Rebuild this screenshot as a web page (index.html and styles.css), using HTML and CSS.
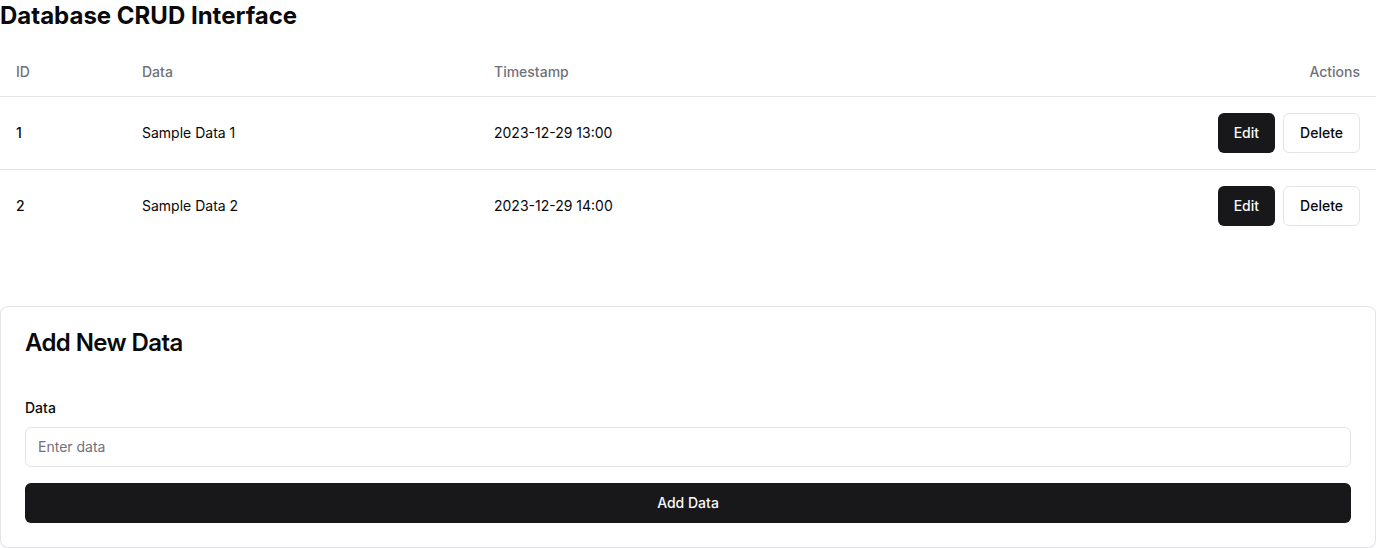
FILE: index.html
```html
<!DOCTYPE html>
<html>
<head>
<meta charset="utf-8">
<link rel="stylesheet" href="styles.css">
</head>
<body>
<div class="page">
  <h1 class="title">Database CRUD Interface</h1>
  <table class="table">
    <thead>
      <tr>
        <th class="col-id">ID</th>
        <th class="col-data">Data</th>
        <th>Timestamp</th>
        <th class="col-actions">Actions</th>
      </tr>
    </thead>
    <tbody>
      <tr>
        <td class="cell-id">1</td>
        <td>Sample Data 1</td>
        <td>2023-12-29 13:00</td>
        <td class="col-actions">
          <div class="actions">
            <button class="btn btn-dark">Edit</button>
            <button class="btn btn-outline">Delete</button>
          </div>
        </td>
      </tr>
      <tr>
        <td class="cell-id">2</td>
        <td>Sample Data 2</td>
        <td>2023-12-29 14:00</td>
        <td class="col-actions">
          <div class="actions">
            <button class="btn btn-dark">Edit</button>
            <button class="btn btn-outline">Delete</button>
          </div>
        </td>
      </tr>
    </tbody>
  </table>

  <div class="card">
    <div class="card-header">
      <h2 class="card-title">Add New Data</h2>
    </div>
    <div class="card-content">
      <label class="label" for="data">Data</label>
      <input id="data" class="input" type="text" placeholder="Enter data">
      <button class="btn btn-dark btn-full">Add Data</button>
    </div>
  </div>
</div>
</body>
</html>
```

FILE: styles.css
```css
* { box-sizing: border-box; }
html, body {
  margin: 0;
  padding: 0;
  background: #ffffff;
  color: #09090b;
  font-family: Inter, "Liberation Sans", sans-serif;
}
.page {
  width: 1376px;
}
.title {
  margin: 0 0 16px 0;
  font-size: 24px;
  line-height: 32px;
  font-weight: 700;
}
.table {
  width: 100%;
  border-collapse: collapse;
  font-size: 14px;
}
.table th {
  height: 48px;
  padding: 0 16px;
  text-align: left;
  vertical-align: middle;
  font-weight: 500;
  color: #71717a;
  border-bottom: 1px solid #e4e4e7;
}
.table td {
  padding: 16px;
  vertical-align: middle;
  line-height: 20px;
}
.table tbody tr {
  border-bottom: 1px solid #e4e4e7;
}
.table tbody tr:last-child {
  border-bottom: 0;
}
.col-id { width: 126px; }
.col-data { width: 352px; }
.table .col-actions {
  text-align: right;
  width: 1%;
  white-space: nowrap;
}
.cell-id { font-weight: 500; }
.actions {
  display: flex;
  justify-content: flex-end;
  gap: 8px;
}
.btn {
  height: 40px;
  padding: 0 16px;
  border-radius: 6px;
  font-family: inherit;
  font-size: 14px;
  font-weight: 500;
  cursor: pointer;
}
.btn-dark {
  background: #18181b;
  color: #fafafa;
  border: 0;
}
.btn-outline {
  background: #ffffff;
  color: #09090b;
  border: 1px solid #e4e4e7;
}
.card {
  margin-top: 64px;
  border: 1px solid #e4e4e7;
  border-radius: 8px;
  box-shadow: 0 1px 2px rgba(0,0,0,0.05);
  background: #fff;
}
.card-header {
  padding: 24px 24px 0 24px;
}
.card-title {
  margin: 0;
  font-size: 24px;
  line-height: 24px;
  font-weight: 600;
  letter-spacing: -0.6px;
}
.card-content {
  padding: 43px 24px 24px 24px;
  display: flex;
  flex-direction: column;
}
.label {
  font-size: 14px;
  line-height: 20px;
  font-weight: 500;
  margin-bottom: 9px;
}
.input {
  height: 40px;
  border: 1px solid #e4e4e7;
  border-radius: 6px;
  padding: 0 12px;
  font-family: inherit;
  font-size: 14px;
  color: #09090b;
  margin-bottom: 16px;
}
.input::placeholder { color: #71717a; }
.btn-full { width: 100%; }
```
